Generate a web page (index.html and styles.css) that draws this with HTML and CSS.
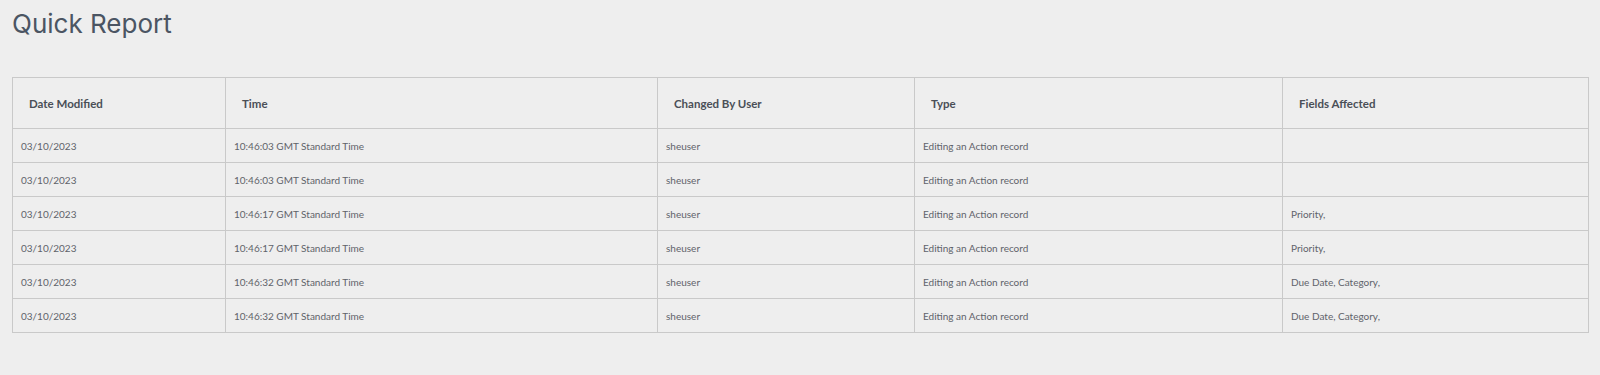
FILE: index.html
```html
<!DOCTYPE html>
<html lang="en">
<head>
    <meta charset="UTF-8">
    <meta name="viewport" content="width=device-width, initial-scale=1.0">
    <title>Quick Report</title>
    <link rel="stylesheet" href="styles.css">
</head>
<body>

    <h1 class="page-title">Quick Report</h1>

    <table class="report">
        <thead>
            <tr>
                <th class="col-date">Date Modified</th>
                <th class="col-time">Time</th>
                <th class="col-user">Changed By User</th>
                <th class="col-type">Type</th>
                <th class="col-fields">Fields Affected</th>
            </tr>
        </thead>
        <tbody>
            <tr>
                <td>03/10/2023</td>
                <td>10:46:03 GMT Standard Time</td>
                <td>sheuser</td>
                <td>Editing an Action record</td>
                <td></td>
            </tr>
            <tr>
                <td>03/10/2023</td>
                <td>10:46:03 GMT Standard Time</td>
                <td>sheuser</td>
                <td>Editing an Action record</td>
                <td></td>
            </tr>
            <tr>
                <td>03/10/2023</td>
                <td>10:46:17 GMT Standard Time</td>
                <td>sheuser</td>
                <td>Editing an Action record</td>
                <td>Priority,</td>
            </tr>
            <tr>
                <td>03/10/2023</td>
                <td>10:46:17 GMT Standard Time</td>
                <td>sheuser</td>
                <td>Editing an Action record</td>
                <td>Priority,</td>
            </tr>
            <tr>
                <td>03/10/2023</td>
                <td>10:46:32 GMT Standard Time</td>
                <td>sheuser</td>
                <td>Editing an Action record</td>
                <td>Due Date, Category,</td>
            </tr>
            <tr>
                <td>03/10/2023</td>
                <td>10:46:32 GMT Standard Time</td>
                <td>sheuser</td>
                <td>Editing an Action record</td>
                <td>Due Date, Category,</td>
            </tr>
        </tbody>
    </table>

</body>
</html>
```

FILE: styles.css
```css
:root {
    --bg: #eeeeee;
    --line: #c9c9c9;
    --title: #4b5563;
    --head-text: #4a4f57;
    --cell-text: #5f636a;
}

* {
    margin: 0;
    padding: 0;
    box-sizing: border-box;
}

body {
    background-color: var(--bg);
    font-family: 'Lato', 'Noto Sans', sans-serif;
    padding: 8px 11px 0 12px;
}

/* Titulo */
.page-title {
    font-family: 'Inter', 'Lato', sans-serif;
    font-size: 26px;
    font-weight: 400;
    color: var(--title);
    line-height: 32px;
    margin-bottom: 37px;
}

/* Tabla */
.report {
    width: 100%;
    table-layout: fixed;
    border-collapse: collapse;
    border: 1px solid var(--line);
}

.report th,
.report td {
    border: 1px solid var(--line);
    text-align: left;
}

.report th {
    height: 51px;
    padding: 0 16px;
    font-size: 11.5px;
    font-weight: 700;
    color: var(--head-text);
}

.report td {
    height: 34px;
    padding: 0 8px;
    font-size: 10px;
    color: var(--cell-text);
}

.col-date { width: 213px; }
.col-time { width: 432px; }
.col-user { width: 257px; }
.col-type { width: 368px; }
```
